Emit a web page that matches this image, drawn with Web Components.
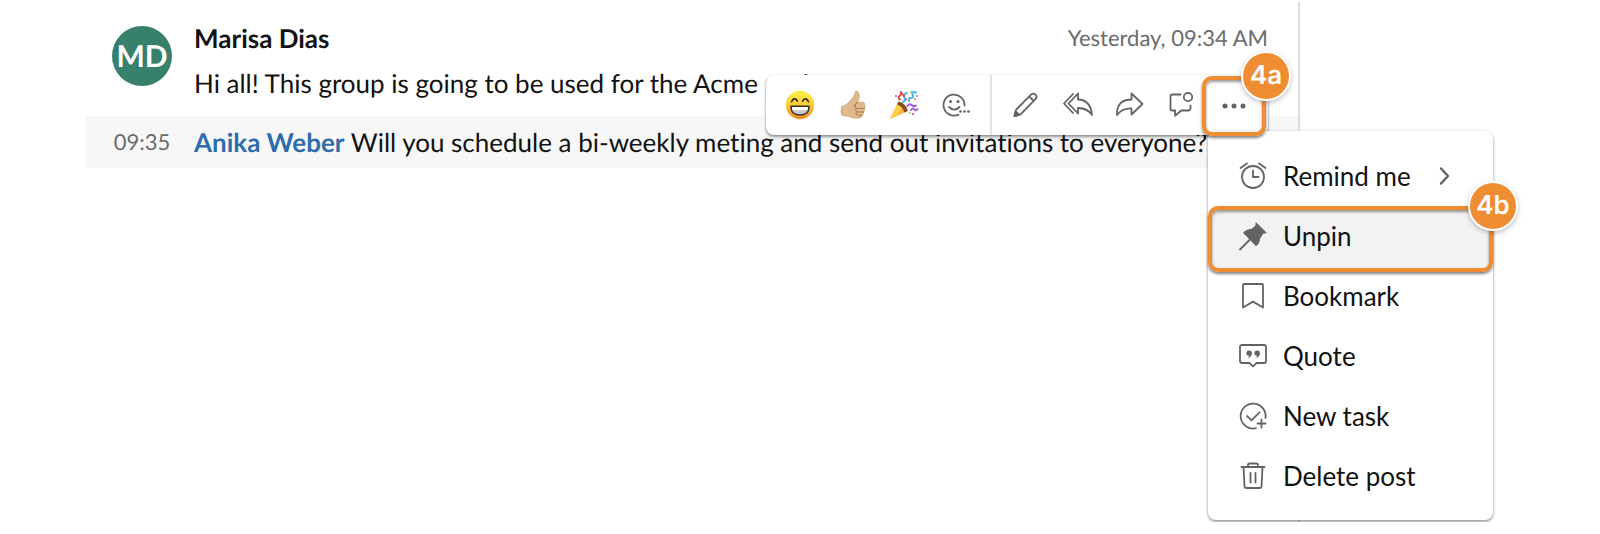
<!DOCTYPE html>
<html lang="en">
<head>
<meta charset="utf-8">
<title>Group conversation</title>
<style>
  body { margin: 0; background: #fff; color: #121212; font: 26px/32px Lato, "Open Sans", sans-serif; font-variant-ligatures: none; text-rendering: geometricPrecision; }
</style>
</head>
<body>
<chat-panel>
  <chat-post author="Marisa Dias" initials="MD" time="Yesterday, 09:34 AM">Hi all! This group is going to be used for the Acme project.</chat-post>
  <chat-reply time="09:35" mention="Anika Weber">Will you schedule a bi-weekly meting and send out invitations to everyone?</chat-reply>
  <post-toolbar slot="overlay"></post-toolbar>
  <post-menu slot="overlay"></post-menu>
</chat-panel>

<script>
const ICONS = {
  grin: `<defs><linearGradient id="g" x1="0" y1="0" x2="0" y2="1"><stop offset="0" stop-color="#fff04a"/><stop offset=".5" stop-color="#fdcb38"/><stop offset="1" stop-color="#f08a24"/></linearGradient></defs>
    <circle cx="15" cy="15" r="14.2" fill="url(#g)"/>
    <path d="M6.600 11.600q2.800-5 5.800-.6M17.600 11q3-4.400 5.800.6" fill="none" stroke="#3c2a10" stroke-width="1.700" stroke-linecap="round"/>
    <path d="M6 16.300h18q.3 8.700-9 8.700t-9-8.700z" fill="#fff" stroke="#33302c" stroke-width="1.500" stroke-linejoin="round"/>
    <path d="M7.500 20.800q7.500 1 15 0-1.500 3.700-7.500 3.700t-7.500-3.700z" fill="#7d7f86" opacity=".45"/>
    <path d="M7 20.200q8 1.300 16 0" fill="none" stroke="#9a9a9a" stroke-width=".6"/>`,
  thumb: `<g transform="translate(2 0)"><path d="M3 16.500q3-1 4.800-2.300 4.700-4.200 7.200-8.200.9-2 1.200-4.200Q17 .4 18.600 1.400q2.400 2.200 1.400 6.600l-1.300 4.200h5q2.400.4 2 3 1 1.400-.3 3.300.8 1.900-.9 3.500.5 2-1.400 3.200-.3 2.700-3.600 2.900-6 .4-10-1.800L3 25.500Q.8 21 3 16.500z" fill="#dfba8c" stroke="#c69c6a" stroke-width=".7"/>
    <path d="M18.700 12.300q-3 1.500-3.400 4.200M25.500 18.400h-7.300q-2.500-.4-2-3M24.700 22h-6.500q-2-.5-1.600-3M23.300 25.200h-5q-2-.6-1.300-2.800" fill="none" stroke="#a67a4a" stroke-width="1"/></g>`,
  party: `<path d="M9.500 11.500Q17 14 18.800 21L2.600 28.500q-1.300.3-1-1z" fill="#f6b53c"/>
    <path d="M9.500 11.500q3.200 1 5.500 3.500L7.500 26.200l-5 2.300q-1.300.3-1-1z" fill="#fbcf4c"/>
    <path d="M9.600 11.500q7.500 2 9.200 9.500l-3.600 1.500Q14 16.500 8 14.500z" fill="#8b4a23"/>
    <g fill="none" stroke-width="2" stroke-linecap="round"><path d="M11 9.500Q8.500 7.500 10.500 6t1.500-4" stroke="#e2473f"/><path d="M14 12q3-1 1.500-4.500T18 3M20 11q-1-3 2-3t1.500-3.500 3.500-2" stroke="#45b4e6"/><path d="M18.500 16q2-3 4-1t4.500.5M22 20q2-2.500 3.500-.5t3-.5" stroke="#a45ad8"/><path d="M13 3.500 15 6" stroke="#e2473f"/></g>
    <g><circle cx="7" cy="6" r="1" fill="#a45ad8"/><circle cx="17" cy="9.500" r="1" fill="#e2473f"/><circle cx="26" cy="9" r="1.100" fill="#f28c2e"/><circle cx="22" cy="2" r="1" fill="#8dc63f"/><circle cx="24" cy="24" r="1.100" fill="#e2473f"/><circle cx="21" cy="23" r=".9" fill="#8dc63f"/><circle cx="28" cy="6" r=".9" fill="#a45ad8"/></g>`,
  react: `<path d="M23.500 15.500A10.500 10.500 0 1 0 17.500 24.600"/><path d="M8 17q5.300 5.300 10.500 0"/><g fill="currentColor" stroke="none"><circle cx="9.500" cy="11.500" r="1.500"/><circle cx="17" cy="11.500" r="1.500"/><circle cx="19.500" cy="21.500" r="1.300"/><circle cx="23.500" cy="21.500" r="1.300"/><circle cx="27.500" cy="21.500" r="1.300"/></g>`,
  pencil: `<path d="M5 19.800 20 4.600q2.200-2 4.400.1t.1 4.500L9.500 24.300 3.500 26.200zM18.200 6.400l4.600 4.600"/><path d="M4.600 21.300 8 24.700 3.500 26.200z" fill="currentColor"/>`,
  reply: `<path d="M10 4 1 13.500 10 23M15 3.500v6q12.500.2 14 15.500Q24 17.800 15 18v5.500L5.500 13.500z"/>`,
  forward: `<path d="M16.500 3.500 27.500 14 16.500 24.500v-6Q7.500 18 2 25 1.500 9.500 16.500 9.500z"/>`,
  comment: `<path d="M13.500 4.500H5.200Q3.500 4.500 3.500 6.200v12.600q0 1.700 1.700 1.700h2.900v5.200l6.200-5.200h7q2.200 0 2.200-2.200v-2.800"/><circle cx="21" cy="7" r="4.200"/>`,
  more: `<g fill="currentColor" stroke="none"><circle cx="6" cy="15" r="2.500"/><circle cx="15" cy="15" r="2.500"/><circle cx="24" cy="15" r="2.500"/></g>`,
  clock: `<circle cx="15" cy="16" r="11"/><path d="M15 9.500V16h5.500M2.500 7 9 2.500M27.500 7 21 2.500"/>`,
  pin: `<path d="M17.800 1 29 12l-3.700.7-3.300 5q.3 4-4 7.500L5 11.700q3.700-3.600 8.200-3.700l4-3z" fill="currentColor" stroke="none"/><path d="M12.500 18 2 28.500"/>`,
  bookmark: `<path d="M6 3h18q1 0 1 1v22.500L15 20.600 5 26.500V4q0-1 1-1z"/>`,
  quote: `<path d="M4 4h22q2 0 2 2v14q0 2-2 2h-7.400L15 25.300 11.400 22H4q-2 0-2-2V6q0-2 2-2z"/><path d="M11.300 9.500a2.600 2.600 0 1 0 .2 5.100q-.3 1.500-2 2.400 4.500-.8 4.500-5a2.600 2.600 0 0 0-2.700-2.500zM19.300 9.500a2.600 2.600 0 1 0 .2 5.100q-.3 1.500-2 2.400 4.500-.8 4.500-5a2.600 2.600 0 0 0-2.700-2.500z" fill="currentColor" stroke="none"/>`,
  task: `<path d="M27.500 17A12.500 12.500 0 1 0 18 27.200M9 15l4.500 4.300 8-8M23.500 18.500v8M19.500 22.500h8"/>`,
  trash: `<path d="M3.500 6h23M10 6V4q0-1.500 1.500-1.500h7Q20 2.500 20 4v2M5.500 6l1 19.500q.1 1.500 1.500 1.500h14q1.400 0 1.500-1.500l1-19.500M12.500 12v9.500M17.500 12v9.500"/>`,
  chevron: `<path d="M12 7.500 19 15l-7 7.500" stroke-width="2.400"/>`
};

const define = (name, template, connect) => customElements.define(name, class extends HTMLElement {
  constructor() {
    super();
    this.attachShadow({ mode: "open" });
  }
  connectedCallback() {
    this.shadowRoot.innerHTML = template;
    connect?.call(this, this.shadowRoot);
  }
});

define("ui-icon", `
  <style>
    :host { display: block; width: 30px; height: 30px; color: #636363; }
    svg { display: block; width: 100%; height: 100%; fill: none; stroke: currentColor; stroke-width: 1.8; stroke-linejoin: round; stroke-linecap: round; }
    .colour { stroke: none; }
  </style>
  <svg viewBox="0 0 30 30" aria-hidden="true"></svg>`,
  function (root) {
    const name = this.getAttribute("name"), svg = root.querySelector("svg");
    svg.innerHTML = ICONS[name];
    if (["grin", "thumb", "party"].includes(name)) svg.classList.add("colour");
  });

define("step-callout", `
  <style>
    :host { display: block; position: relative; z-index: 3; }
    .ring { position: absolute; inset: 0; border: 4px solid #f08d33; border-radius: 10px; pointer-events: none;
      box-shadow: 0 2px 3px rgba(0,0,0,.5), inset 0 2px 3px rgba(0,0,0,.4); }
    .badge { position: absolute; top: -25px; right: -25px; width: 46px; height: 46px; border: 2px solid #fff; border-radius: 50%;
      background: #f08d33; color: #fff; font: 600 26px/46px Inter, "Liberation Sans", sans-serif; text-align: center;
      box-shadow: 0 2px 5px rgba(0,0,0,.25); }
  </style>
  <slot></slot><div class="ring"></div><div class="badge"></div>`,
  function (root) { root.querySelector(".badge").textContent = this.getAttribute("label"); });

define("chat-panel", `
  <style>
    :host { display: block; position: relative; box-sizing: border-box; margin: 2px 300px 0 86px; min-height: 520px; border-right: 2px solid #dcdcdc; }
  </style>
  <slot></slot><slot name="overlay"></slot>`);

define("chat-post", `
  <style>
    :host { display: grid; grid-template-columns: 60px 1fr; gap: 22px; padding: 20px 30px 16px 26px; }
    .avatar { width: 60px; height: 60px; margin-top: 4px; border-radius: 50%; background: #37806b; color: #fff; font-weight: 700; font-size: 30px; line-height: 60px; text-align: center; }
    header { display: flex; justify-content: space-between; line-height: 32px; }
    h2 { margin: 0; font-size: 26px; font-weight: 700; }
    time { color: #6b6b6b; font-size: 22px; }
    p { margin: 12px 0 0; line-height: 34px; white-space: nowrap; }
  </style>
  <div class="avatar"></div>
  <article><header><h2></h2><time></time></header><p><slot></slot></p></article>`,
  function (root) {
    root.querySelector(".avatar").textContent = this.getAttribute("initials");
    root.querySelector("h2").textContent = this.getAttribute("author");
    root.querySelector("time").textContent = this.getAttribute("time");
  });

define("chat-reply", `
  <style>
    :host { display: grid; grid-template-columns: 60px 1fr; gap: 22px; align-items: center; padding: 0 26px; height: 52px; background: #f7f7f7; }
    time { color: #6b6b6b; font-size: 22px; text-align: center; }
    p { margin: 0; white-space: nowrap; }
    a { color: #2f6cab; font-weight: 700; text-decoration: none; }
  </style>
  <time></time><p><a href="#profile"></a> <slot></slot></p>`,
  function (root) {
    root.querySelector("time").textContent = this.getAttribute("time");
    root.querySelector("a").textContent = this.getAttribute("mention");
  });

define("post-toolbar", `
  <style>
    :host { display: flex; position: absolute; top: 73px; right: 30px; height: 60px; padding-right: 2px; border-radius: 8px; background: #fff;
      box-shadow: 0 2px 3px rgba(0,0,0,.4), 0 0 2px rgba(0,0,0,.12); }
    .group { display: flex; align-items: center; }
    .reactions { padding: 0 8px; border-right: 2px solid #e3e3e3; }
    .actions { padding-left: 8px; }
    button { display: grid; place-items: center; width: 52px; height: 60px; padding: 0; border: 0; background: none; }
    step-callout { width: 64px; height: 60px; margin: 2px 0 0 -6px; }
    step-callout button { width: 64px; }
  </style>
  <div class="group reactions">
    <button aria-label="Grinning face"><ui-icon name="grin"></ui-icon></button>
    <button aria-label="Thumbs up"><ui-icon name="thumb"></ui-icon></button>
    <button aria-label="Party popper"><ui-icon name="party"></ui-icon></button>
    <button aria-label="More reactions"><ui-icon name="react"></ui-icon></button>
  </div>
  <div class="group actions">
    <button aria-label="Edit"><ui-icon name="pencil"></ui-icon></button>
    <button aria-label="Reply"><ui-icon name="reply"></ui-icon></button>
    <button aria-label="Forward"><ui-icon name="forward"></ui-icon></button>
    <button aria-label="Start thread"><ui-icon name="comment"></ui-icon></button>
    <step-callout label="4a"><button aria-label="More options" aria-expanded="true"><ui-icon name="more"></ui-icon></button></step-callout>
  </div>`);

define("menu-entry", `
  <style>
    :host { display: block; }
    button { display: flex; align-items: center; gap: 15px; width: 100%; height: 60px; padding: 0 34px 0 30px; border: 0; background: none; color: #121212; font: inherit; text-align: left; }
    :host([active]) button { height: 66px; border-radius: 10px; background: #f2f2f2; padding-bottom: 6px; }
    span { flex: 1; }
  </style>
  <button role="menuitem"><span><slot></slot></span></button>`,
  function (root) {
    const button = root.querySelector("button");
    button.insertAdjacentHTML("afterbegin", `<ui-icon name="${this.getAttribute("icon")}"></ui-icon>`);
    if (this.hasAttribute("submenu")) button.insertAdjacentHTML("beforeend", `<ui-icon name="chevron"></ui-icon>`);
  });

define("post-menu", `
  <style>
    :host { display: block; position: absolute; z-index: 1; top: 129px; right: -195px; width: 285px; padding: 15px 0 14px; border-radius: 8px; background: #fff; box-sizing: border-box;
      box-shadow: 0 2px 3px rgba(0,0,0,.35), 0 0 3px rgba(0,0,0,.15); }
    step-callout { margin-bottom: -6px; }
  </style>
  <div role="menu" aria-label="Post options">
    <menu-entry icon="clock" submenu>Remind me</menu-entry>
    <step-callout label="4b"><menu-entry icon="pin" active>Unpin</menu-entry></step-callout>
    <menu-entry icon="bookmark">Bookmark</menu-entry>
    <menu-entry icon="quote">Quote</menu-entry>
    <menu-entry icon="task">New task</menu-entry>
    <menu-entry icon="trash">Delete post</menu-entry>
  </div>`);
</script>
</body>
</html>
